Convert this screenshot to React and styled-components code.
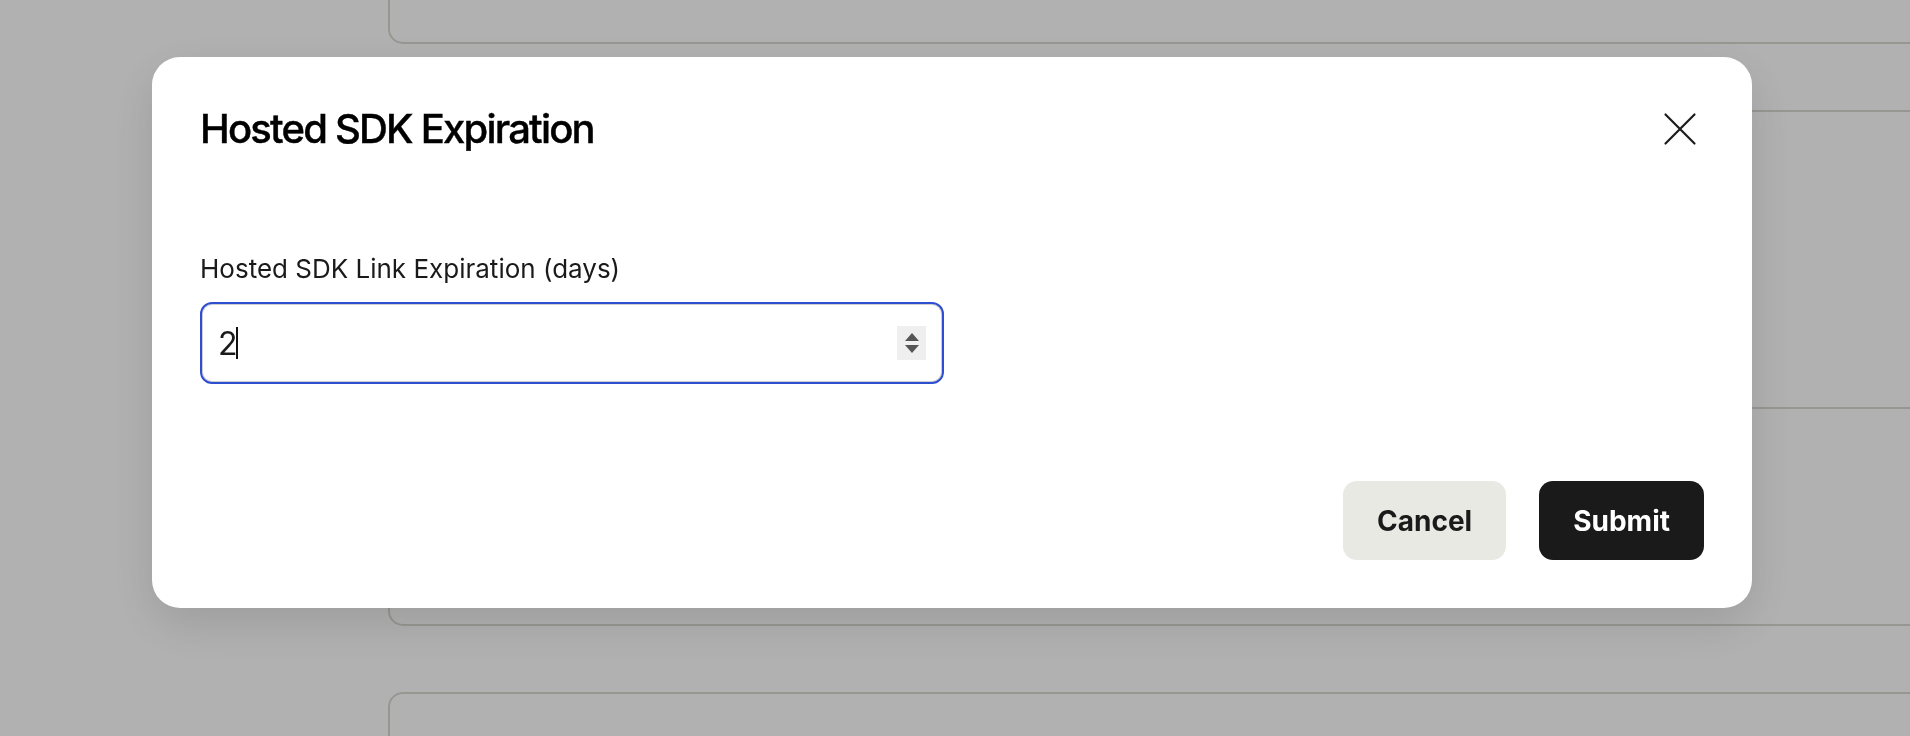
import { createGlobalStyle } from "styled-components";
import styled from "styled-components";

const GlobalStyle = createGlobalStyle`
  html, body {
    margin: 0;
    padding: 0;
    background: #ffffff;
    font-family: Inter, "Noto Sans", sans-serif;
    -webkit-font-smoothing: antialiased;
  }
  * {
    box-sizing: border-box;
  }
`;

// page underneath the dialog
const Page = styled.div`
  height: 736px;
  overflow: hidden;
  display: flex;
  flex-direction: column;
  gap: 66px;
  padding-left: 388px;
`;

const Card = styled.div`
  flex-shrink: 0;
  height: ${(p) => p.height}px;
  margin-right: -60px;
  border: 2px solid #dadad3;
  border-radius: 15px;
  background: #ffffff;
  display: flex;
  flex-direction: column;
`;

const TopCard = styled(Card)`
  border-top: none;
  border-top-left-radius: 0;
  border-top-right-radius: 0;
`;

const CardSection = styled.div`
  height: ${(p) => p.height}px;
  border-bottom: ${(p) => (p.divider ? "2px solid #dadad3" : "none")};
`;

const Overlay = styled.div`
  position: fixed;
  inset: 0;
  background: rgba(0, 0, 0, 0.305);
  display: flex;
  justify-content: center;
  align-items: flex-start;
  padding-top: 57px;
  padding-right: 6px;
`;

const Dialog = styled.div`
  width: 1600px;
  background: #ffffff;
  border-radius: 28px;
  padding: 48px;
  box-shadow: 0 16px 48px rgba(0, 0, 0, 0.12);
  display: flex;
  flex-direction: column;
`;

const Header = styled.div`
  height: 48px;
  display: flex;
  align-items: center;
  justify-content: space-between;
`;

const Title = styled.h2`
  margin: 0;
  font-size: 40px;
  font-weight: 500;
  letter-spacing: -0.045em;
  color: #000000;
  line-height: 48px;
  -webkit-text-stroke: 0.4px #000000;
`;

const CloseButton = styled.button`
  width: 48px;
  height: 48px;
  padding: 0;
  border: none;
  background: transparent;
  display: flex;
  align-items: center;
  justify-content: center;
  color: #1c1c1c;
  cursor: pointer;
`;

const Body = styled.div`
  padding-top: 98px;
  display: flex;
  flex-direction: column;
  gap: 15px;
`;

const Label = styled.label`
  font-size: 26px;
  line-height: 36px;
  font-weight: 400;
  color: #1a1a1a;
  letter-spacing: 0;
`;

const Field = styled.div`
  position: relative;
  width: 744px;
  height: 82px;
  border: 2px solid #2f4fd2;
  border-radius: 12px;
  box-shadow: inset 0 0 0 1px #cfcfcf;
  display: flex;
  align-items: center;
  padding-left: 16px;
`;

const Value = styled.span`
  font-size: 32px;
  color: #1a1a1a;
  letter-spacing: -0.04em;
  display: flex;
  align-items: center;
`;

const Caret = styled.span`
  display: inline-block;
  width: 2px;
  height: 32px;
  background: #111;
  margin-left: 0;
`;

const Spinner = styled.div`
  position: absolute;
  right: 16px;
  top: 22px;
  width: 29px;
  height: 34px;
  background: #efefef;
  display: flex;
  flex-direction: column;
  align-items: center;
  justify-content: center;
  gap: 4px;
`;

const Arrow = styled.span`
  width: 0;
  height: 0;
  border-left: 7px solid transparent;
  border-right: 7px solid transparent;
  ${(p) =>
    p.up
      ? "border-bottom: 8px solid #555;"
      : "border-top: 8px solid #555;"}
`;

const Footer = styled.div`
  margin-top: 97px;
  display: flex;
  justify-content: flex-end;
  gap: 33px;
`;

const Button = styled.button`
  height: 79px;
  padding: 0 34px;
  border: none;
  border-radius: 14px;
  font-family: Inter, "Noto Sans", sans-serif;
  font-size: 28px;
  font-weight: 700;
  cursor: pointer;
  background: ${(p) => (p.primary ? "#1a1a1a" : "#e9e9e4")};
  color: ${(p) => (p.primary ? "#ffffff" : "#1a1a1a")};
`;

function CloseIcon() {
  return (
    <svg width="48" height="48" viewBox="0 0 48 48" fill="none">
      <path
        d="M9.5 9.5 L38.5 38.5 M38.5 9.5 L9.5 38.5"
        stroke="currentColor"
        strokeWidth="2.2"
        strokeLinecap="round"
      />
    </svg>
  );
}

export default function App() {
  return (
    <>
      <GlobalStyle />
      <Page>
        <TopCard height={44} />
        <Card height={516}>
          <CardSection height={297} divider />
          <CardSection height={215} />
        </Card>
        <Card height={300} />
      </Page>
      <Overlay>
        <Dialog role="dialog">
          <Header>
            <Title>Hosted SDK Expiration</Title>
            <CloseButton aria-label="Close">
              <CloseIcon />
            </CloseButton>
          </Header>
          <Body>
            <Label>Hosted SDK Link Expiration (days)</Label>
            <Field>
              <Value>
                2<Caret />
              </Value>
              <Spinner>
                <Arrow up />
                <Arrow />
              </Spinner>
            </Field>
          </Body>
          <Footer>
            <Button>Cancel</Button>
            <Button primary>Submit</Button>
          </Footer>
        </Dialog>
      </Overlay>
    </>
  );
}
